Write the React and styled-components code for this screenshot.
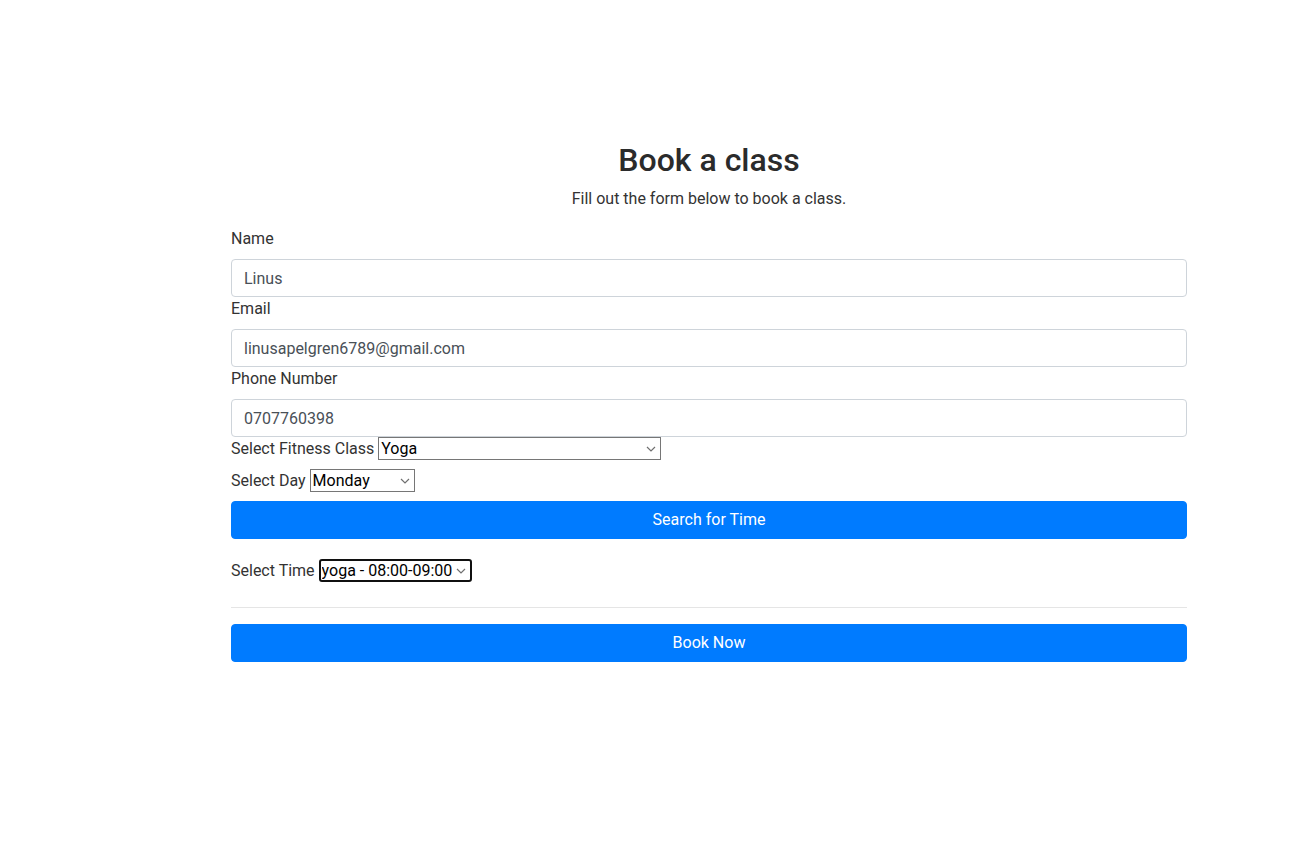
import React from 'react';
import styled, { createGlobalStyle } from 'styled-components';

const GlobalStyle = createGlobalStyle`
  body {
    margin: 0;
    background: #fff;
    font-family: Roboto, "Liberation Sans", sans-serif;
    font-size: 16px;
    line-height: 1.5;
    color: #333;
  }
  * { box-sizing: border-box; }
`;

const chevron =
  "url(\"data:image/svg+xml;utf8,<svg xmlns='http://www.w3.org/2000/svg' width='10' height='6' viewBox='0 0 10 6'><path d='M1 1l4 4 4-4' fill='none' stroke='%23707070' stroke-width='1.2'/></svg>\")";

const Page = styled.main`
  width: 956px;
  margin-left: 231px;
  padding-top: 141px;
`;

const Title = styled.h2`
  margin: 0 0 8px;
  font-size: 32px;
  font-weight: 500;
  line-height: 1.2;
  text-align: center;
  color: #2b2b2b;
`;

const Lead = styled.p`
  margin: 0 0 16px;
  text-align: center;
`;

const Label = styled.label`
  display: block;
  margin-bottom: 8px;
`;

const Input = styled.input`
  display: block;
  width: 100%;
  height: 38px;
  padding: 6px 12px;
  font: inherit;
  color: #495057;
  border: 1px solid #ced4da;
  border-radius: 4px;
  background: #fff;
`;

const Row = styled.div`
  display: flex;
  align-items: flex-start;
  height: 24px;
  margin-bottom: ${p => p.$gap || 8}px;
  margin-top: ${p => p.$top || 0}px;
`;

const Select = styled.select`
  appearance: none;
  width: ${p => p.$w}px;
  height: 23px;
  margin-left: 4px;
  padding: 0 16px 0 ${p => (p.$focused ? 1 : 2)}px;
  font-family: Roboto, "Liberation Sans", sans-serif;
  font-size: 16px;
  line-height: 19px;
  color: #000;
  background: #fff ${chevron} no-repeat right 4px center;
  border: ${p => (p.$focused ? '2px solid #101010' : '1px solid #767676')};
  border-radius: ${p => (p.$focused ? 3 : 0)}px;
  outline: none;
`;

const Button = styled.button`
  display: block;
  width: 100%;
  height: 38px;
  padding: 6px 12px;
  font: inherit;
  color: #fff;
  background: #007bff;
  border: 1px solid #007bff;
  border-radius: 4px;
`;

const Divider = styled.hr`
  margin: 16px 0;
  border: 0;
  border-top: 1px solid rgba(0, 0, 0, 0.1);
`;

const Field = ({ label, value, type = 'text' }) => (
  <div>
    <Label>{label}</Label>
    <Input type={type} defaultValue={value} />
  </div>
);

export default function App() {
  return (
    <>
      <GlobalStyle />
      <Page>
        <Title>Book a class</Title>
        <Lead>Fill out the form below to book a class.</Lead>
        <form onSubmit={e => e.preventDefault()}>
          <Field label="Name" value="Linus" />
          <Field label="Email" value="linusapelgren6789@gmail.com" type="email" />
          <Field label="Phone Number" value="0707760398" />
          <Row>
            Select Fitness Class
            <Select $w={283} defaultValue="yoga">
              <option value="yoga">Yoga</option>
              <option value="spinning">Spinning</option>
            </Select>
          </Row>
          <Row>
            Select Day
            <Select $w={105} defaultValue="monday">
              <option value="monday">Monday</option>
              <option value="tuesday">Tuesday</option>
              <option value="wednesday">Wednesday</option>
            </Select>
          </Row>
          <Button type="button">Search for Time</Button>
          <Row $top={20} $gap={24}>
            Select Time
            <Select $w={153} $focused defaultValue="y1">
              <option value="y1">yoga - 08:00-09:00</option>
            </Select>
          </Row>
          <Divider />
          <Button type="submit">Book Now</Button>
        </form>
      </Page>
    </>
  );
}
